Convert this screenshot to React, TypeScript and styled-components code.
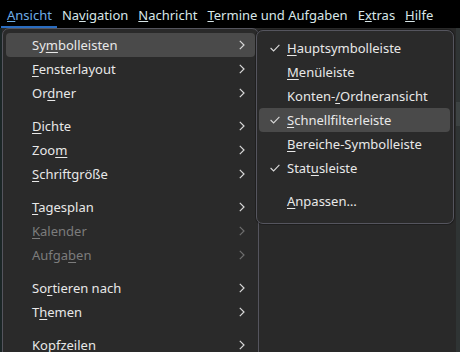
import React from 'react'
import styled, { createGlobalStyle } from 'styled-components'

const GlobalStyle = createGlobalStyle`
  html, body {
    margin: 0;
    padding: 0;
    background: #292929;
    font-family: "Noto Sans", "Open Sans", sans-serif;
    font-size: 13px;
    overflow: hidden;
  }
`

const Window = styled.div`
  position: relative;
  width: 460px;
  height: 352px;
  background: #292929;
  overflow: hidden;
`

const MenuBar = styled.div`
  display: flex;
  height: 28px;
  background: #000;
  padding-left: 1px;
`

const BarItem = styled.div<{ $active?: boolean }>`
  position: relative;
  padding: 0 5px 0 6px;
  line-height: 30px;
  height: 26px;
  color: ${p => (p.$active ? '#6eaee6' : '#d8e6e8')};
  border-bottom: 2px solid ${p => (p.$active ? '#2a6cc0' : 'transparent')};
  & + & {
    padding-left: 5px;
  }
`

const Peek = styled.div`
  position: absolute;
  left: 456px;
  top: 28px;
  width: 4px;
  height: 324px;
  background: #2f3434;
  &::after {
    content: '';
    position: absolute;
    left: 0;
    top: 74px;
    width: 4px;
    height: 24px;
    background: #3c4242;
  }
`

const LeftEdge = styled.div`
  position: absolute;
  left: 0;
  top: 28px;
  width: 2px;
  height: 324px;
  background: #1b2626;
`

const Menu = styled.div<{ $left: number; $top: number; $width: number }>`
  position: absolute;
  left: ${p => p.$left}px;
  top: ${p => p.$top}px;
  width: ${p => p.$width}px;
  box-sizing: border-box;
  background: #2a2a2a;
  border: 1px solid #55555e;
  border-radius: 7px;
  display: flex;
  flex-direction: column;
  color: #e8e8e8;
`

const MainMenu = styled(Menu)`
  height: 340px;
  padding: 4px 3px 0 3px;
  border-bottom-left-radius: 0;
  border-bottom-right-radius: 0;
`

const SubMenu = styled(Menu)`
  padding: 5px 3px 10px 2px;
  box-shadow: 0 0 0 1px rgba(0, 0, 0, 0.25);
`

const Item = styled.div<{ $hover?: boolean; $disabled?: boolean; $indent: number }>`
  display: flex;
  align-items: center;
  height: 24px;
  flex-shrink: 0;
  padding-left: ${p => p.$indent}px;
  padding-right: 10px;
  border-radius: 4px;
  background: ${p => (p.$hover ? '#4a4a4a' : 'transparent')};
  color: ${p => (p.$disabled ? '#7c7c7c' : '#e8e8e8')};
`

const Label = styled.span`
  flex: 1;
  white-space: nowrap;
  u {
    text-decoration-thickness: 1px;
    text-underline-offset: 2px;
  }
`

const CheckSlot = styled.span`
  width: 17px;
  flex-shrink: 0;
  display: flex;
  align-items: center;
`

const Separator = styled.div`
  height: 9px;
  flex-shrink: 0;
`

const Chevron = ({ dim }: { dim?: boolean }) => (
  <svg width="6" height="10" viewBox="0 0 6 10" style={{ flexShrink: 0 }}>
    <path d="M0.8 0.8 L5 5 L0.8 9.2" fill="none" stroke={dim ? '#6e6e6e' : '#d8d8d8'} strokeWidth="1.2" />
  </svg>
)

const Check = () => (
  <svg width="10" height="8" viewBox="0 0 10 8">
    <path d="M0.6 4 L3.6 7 L9.4 0.8" fill="none" stroke="#d8d8d8" strokeWidth="1.1" />
  </svg>
)

const mn = (text: string, i: number) => (
  <>
    {text.slice(0, i)}
    <u>{text[i]}</u>
    {text.slice(i + 1)}
  </>
)

type Entry = { label: string; key: number; disabled?: boolean; hover?: boolean } | 'sep'

const mainItems: Entry[] = [
  { label: 'Symbolleisten', key: 2, hover: true },
  { label: 'Fensterlayout', key: 0 },
  { label: 'Ordner', key: 2 },
  'sep',
  { label: 'Dichte', key: 0 },
  { label: 'Zoom', key: 3 },
  { label: 'Schriftgröße', key: 0 },
  'sep',
  { label: 'Tagesplan', key: 0 },
  { label: 'Kalender', key: 0, disabled: true },
  { label: 'Aufgaben', key: 5, disabled: true },
  'sep',
  { label: 'Sortieren nach', key: 2 },
  { label: 'Themen', key: 1 },
  'sep',
  { label: 'Kopfzeilen', key: 4 },
]

type SubEntry = { label: string; key: number; checked?: boolean; hover?: boolean } | 'sep'

const subItems: SubEntry[] = [
  { label: 'Hauptsymbolleiste', key: 0, checked: true },
  { label: 'Menüleiste', key: 0 },
  { label: 'Konten-/Ordneransicht', key: 7 },
  { label: 'Schnellfilterleiste', key: 0, checked: true, hover: true },
  { label: 'Bereiche-Symbolleiste', key: 0 },
  { label: 'Statusleiste', key: 4, checked: true },
  'sep',
  { label: 'Anpassen…', key: 0 },
]

export default function App() {
  return (
    <Window>
      <GlobalStyle />
      <MenuBar>
        <BarItem $active>{mn('Ansicht', 0)}</BarItem>
        <BarItem>{mn('Navigation', 2)}</BarItem>
        <BarItem>{mn('Nachricht', 0)}</BarItem>
        <BarItem>{mn('Termine und Aufgaben', 0)}</BarItem>
        <BarItem>{mn('Extras', 1)}</BarItem>
        <BarItem>{mn('Hilfe', 0)}</BarItem>
      </MenuBar>
      <LeftEdge />
      <Peek />
      <MainMenu $left={2} $top={28} $width={257}>
        {mainItems.map((e, i) =>
          e === 'sep' ? (
            <Separator key={i} />
          ) : (
            <Item key={i} $indent={26} $hover={e.hover} $disabled={e.disabled}>
              <Label>{mn(e.label, e.key)}</Label>
              <Chevron dim={e.disabled} />
            </Item>
          )
        )}
      </MainMenu>
      <SubMenu $left={256} $top={30} $width={198}>
        {subItems.map((e, i) =>
          e === 'sep' ? (
            <Separator key={i} />
          ) : (
            <Item key={i} $indent={i === subItems.length - 1 ? 28 : 11} $hover={e.hover}>
              {i !== subItems.length - 1 && <CheckSlot>{e.checked && <Check />}</CheckSlot>}
              <Label>{mn(e.label, e.key)}</Label>
            </Item>
          )
        )}
      </SubMenu>
    </Window>
  )
}
